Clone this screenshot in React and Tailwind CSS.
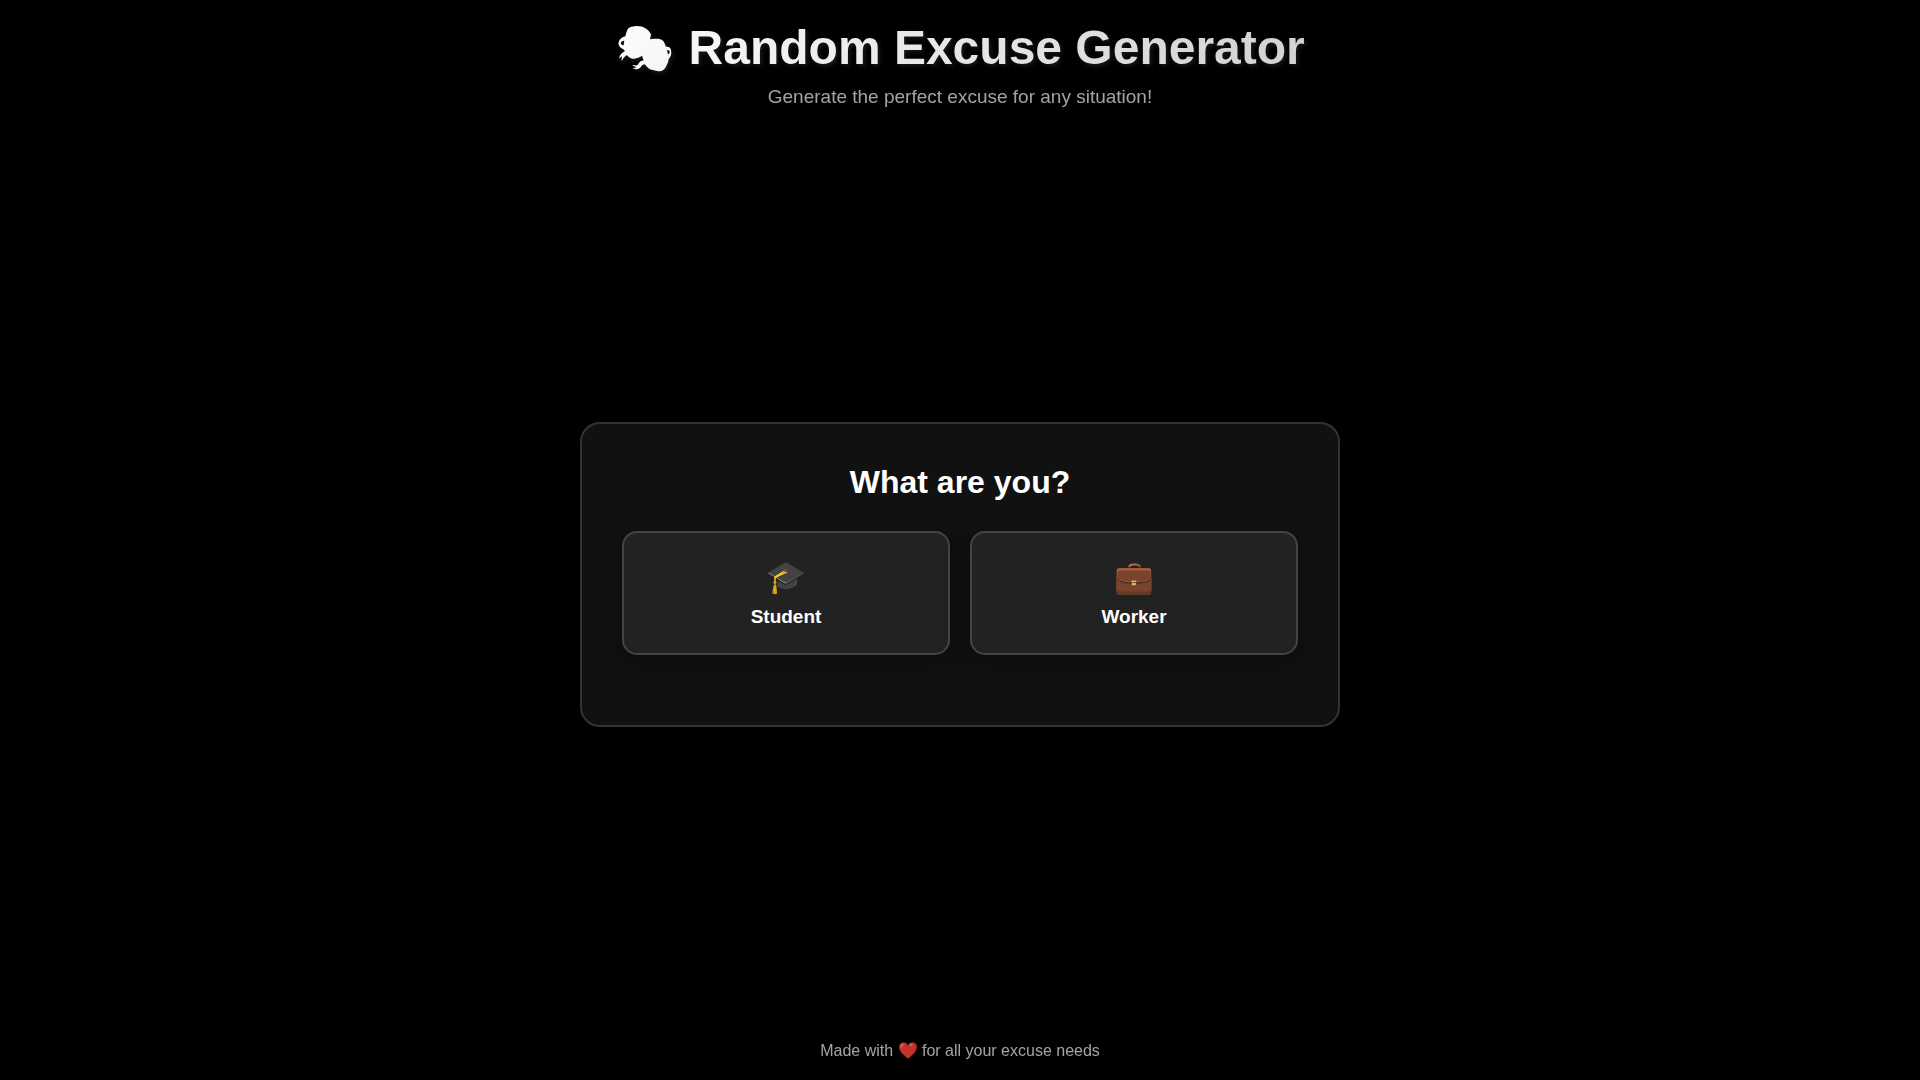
import React from 'react';

const roles = [
  { icon: '🎓', label: 'Student' },
  { icon: '💼', label: 'Worker' },
];

const App = () => {
  return (
    <div className="min-h-screen bg-black text-white font-['Liberation_Sans',Arial,sans-serif] flex flex-col p-5">
      {/* Header */}
      <header className="w-full max-w-[760px] mx-auto text-center">
        <h1 className="text-5xl leading-[56px] font-bold mb-[11px] bg-linear-135 from-white to-[#cccccc] bg-clip-text text-transparent [text-shadow:2px_2px_4px_rgba(255,255,255,0.1)]">
          🎭 Random Excuse Generator
        </h1>
        <p className="text-[19px] leading-5 text-[#cccccc] opacity-80">
          Generate the perfect excuse for any situation!
        </p>
      </header>

      {/* Role selection */}
      <main className="flex-1 flex items-center justify-center">
        <section className="w-full max-w-[760px] bg-[#111111] border-2 border-[#333333] rounded-[20px] px-10 pt-10 pb-[70px]">
          <h2 className="text-[32px] leading-[37px] font-bold text-center mb-[30px]">What are you?</h2>
          <div className="grid grid-cols-2 gap-5">
            {roles.map((role) => (
              <button
                key={role.label}
                type="button"
                className="flex flex-col items-center gap-2.5 bg-[#222222] border-2 border-[#444444] rounded-[15px] p-[25px] shadow-[0_8px_25px_rgba(0,0,0,0.3)] cursor-pointer"
              >
                <span className="text-[32px] leading-[38px]">{role.icon}</span>
                <span className="text-[19px] leading-[22px] font-bold">{role.label}</span>
              </button>
            ))}
          </div>
        </section>
      </main>

      {/* Footer */}
      <footer className="text-center text-base leading-[18px] text-[#cccccc] opacity-80">
        Made with ❤️ for all your excuse needs
      </footer>
    </div>
  );
};

export default App;
